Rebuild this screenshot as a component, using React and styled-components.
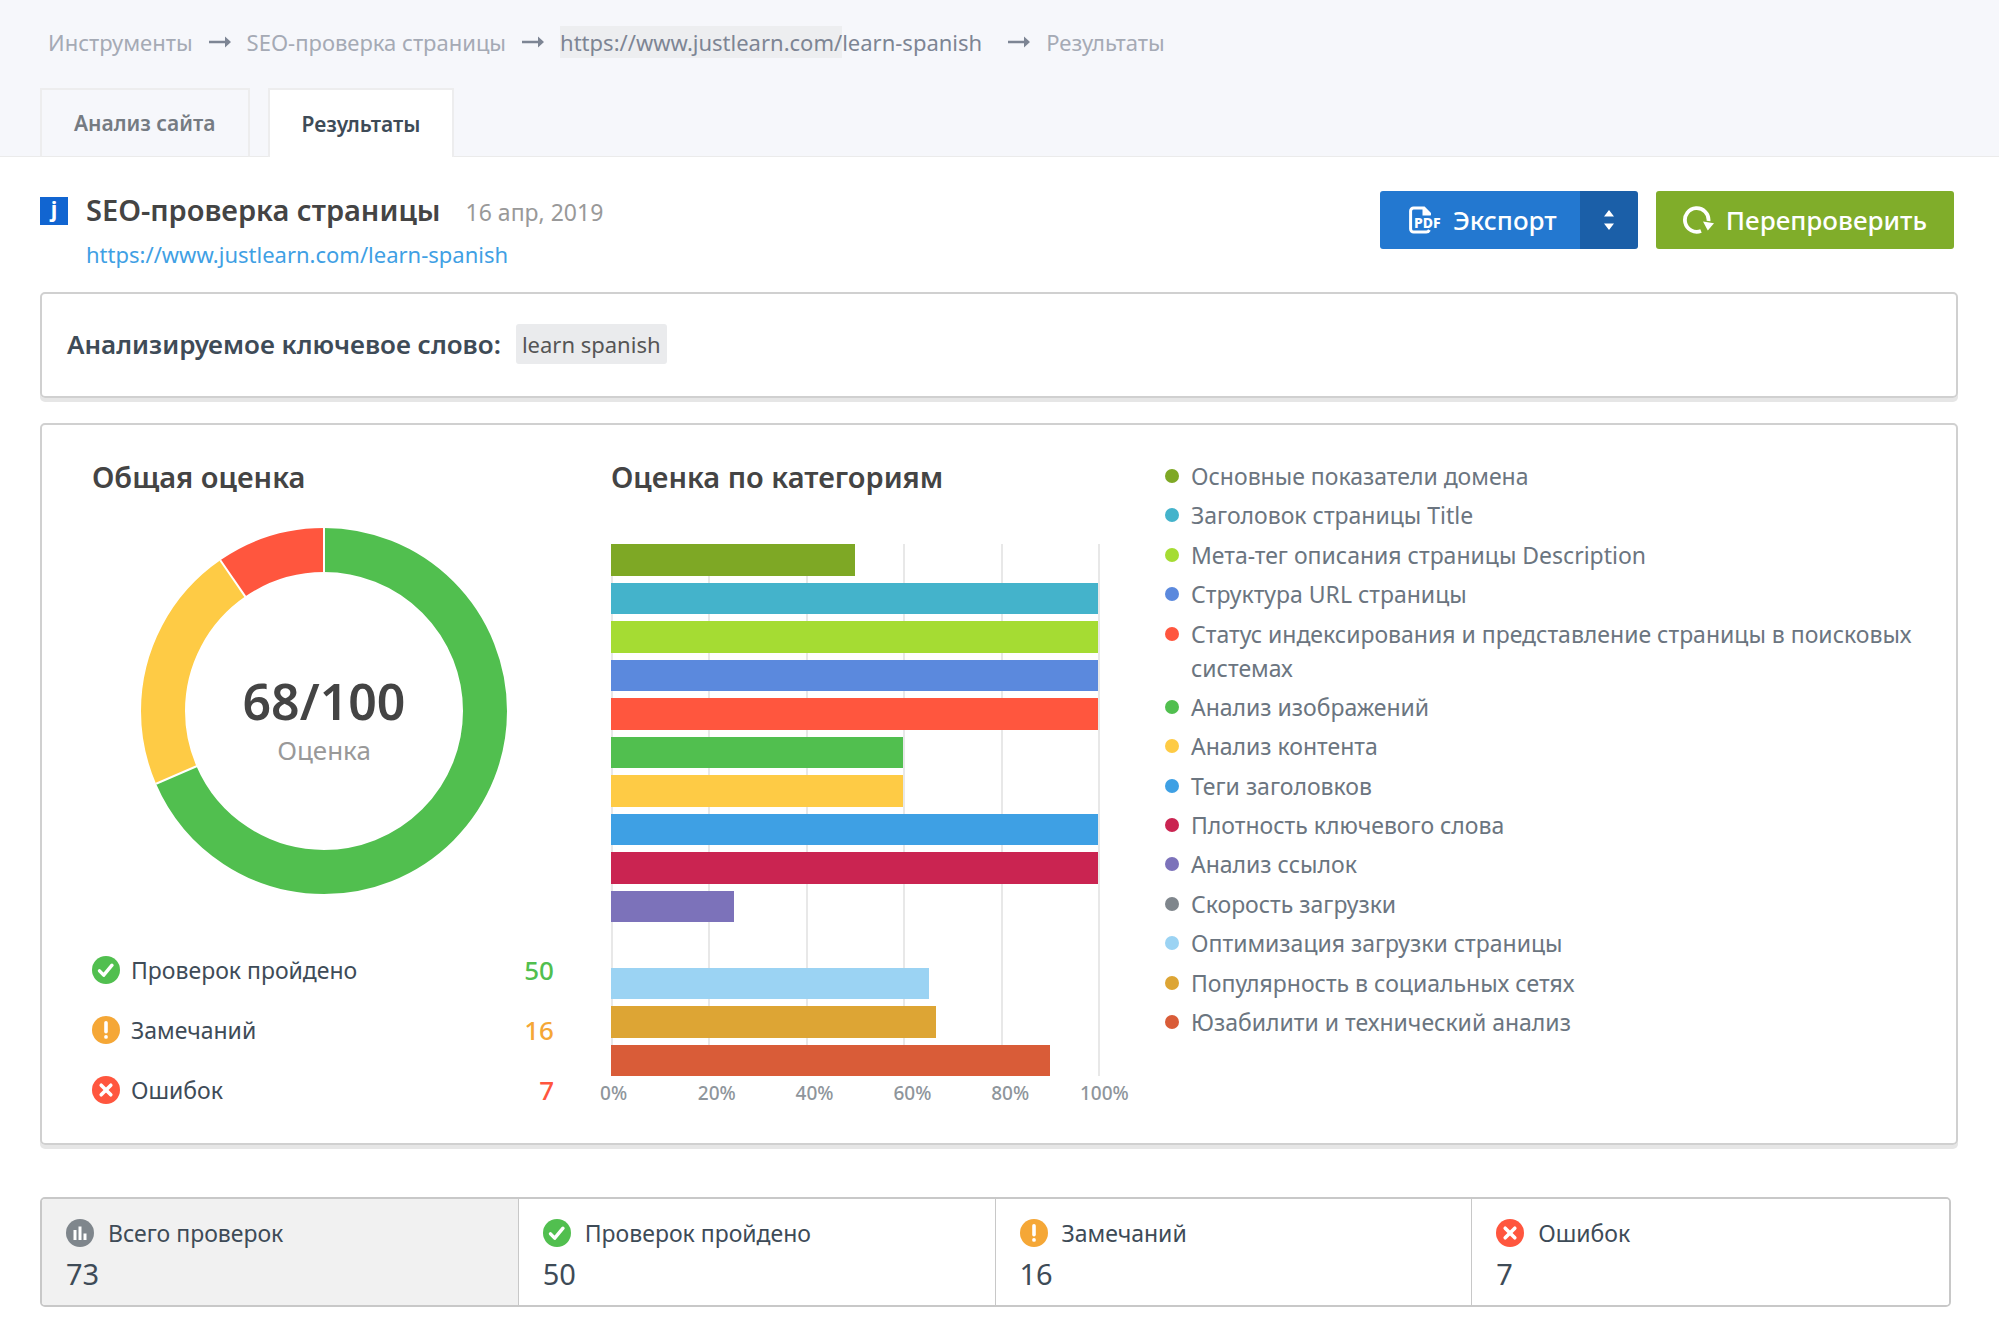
import styled, { createGlobalStyle } from 'styled-components';

const GlobalStyle = createGlobalStyle`
    * {
        box-sizing: border-box;
    }

    body {
        margin: 0;
        background: #fff;
        color: #3e4b57;
        font-family: "Noto Sans", "Open Sans", sans-serif;
        font-size: 23px;
    }

    h1, h2, p, ul, ol {
        margin: 0;
        padding: 0;
    }

    ul, ol {
        list-style: none;
    }

    button {
        font-family: inherit;
        cursor: pointer;
    }
`;

const TopBar = styled.header`
    display: flex;
    flex-direction: column;
    gap: 30px;
    padding: 26px 40px 0;
    background: #f6f7fb;
    box-shadow: inset 0 -1px #ebebeb;
`;

const Breadcrumbs = styled.ol`
    display: flex;
    align-items: center;
    gap: 16px;
    padding-left: 8px;
    line-height: 32px;
    font-size: 22px;
`;

const Crumb = styled.li`
    display: flex;
    align-items: center;
    gap: 16px;
    color: #a5aab5;

    &:nth-child(4) {
        margin-left: 10px;
    }
`;

const CrumbLink = styled.a`
    color: ${({ $dark }) => ($dark ? '#7d8594' : 'inherit')};
    text-decoration: none;
`;

const Domain = styled.span`
    display: inline-block;
    background: #edeef0;
`;

const Tabs = styled.div`
    display: flex;
    gap: 18px;
`;

const Tab = styled.button`
    height: 69px;
    padding: 0 32px;
    border: 2px solid #ededee;
    border-bottom: ${({ $active }) => ($active ? '0' : '1px solid #ebebeb')};
    background: ${({ $active }) => ($active ? '#fff' : 'transparent')};
    color: ${({ $active }) => ($active ? '#3e4b57' : '#757b82')};
    font-size: 21px;
    font-weight: 600;
`;

const Main = styled.main`
    padding: 31px 41px 40px 40px;
`;

const PageHead = styled.div`
    display: flex;
    justify-content: space-between;
    align-items: flex-start;
    padding-right: 4px;
    margin-bottom: 18px;
`;

const TitleBlock = styled.div`
    display: grid;
    grid-template-columns: 28px auto;
    column-gap: 18px;
    align-items: center;
`;

const Favicon = styled.svg`
    width: 28px;
    height: 28px;
    overflow: visible;
    background: #1165d1;
`;

const TitleRow = styled.div`
    display: flex;
    align-items: baseline;
    gap: 25px;
    line-height: 44px;
`;

const Title = styled.h1`
    color: #444;
    font-size: 29px;
    font-weight: 600;
`;

const CheckDate = styled.time`
    color: #999;
    font-size: 23px;
`;

const PageUrl = styled.a`
    grid-column: 2;
    color: #3fa0e4;
    font-size: 22px;
    line-height: 40px;
    text-decoration: none;
`;

const Actions = styled.div`
    display: flex;
    gap: 18px;
    padding-top: 3px;
`;

const SplitButton = styled.div`
    display: flex;
    overflow: hidden;
    border-radius: 3px;
`;

const ActionButton = styled.button`
    display: flex;
    align-items: center;
    gap: 12px;
    height: 58px;
    padding: ${({ $pad }) => $pad};
    border: 0;
    border-radius: ${({ $radius }) => $radius || 0}px;
    background: ${({ $color }) => $color};
    color: #fff;
    font-size: 26px;
    font-weight: 500;
`;

const Card = styled.section`
    border: 2px solid #d0d0d0;
    border-radius: 5px;
    box-shadow: 0 4px #e6e6e6;
`;

const KeywordCard = styled(Card)`
    display: flex;
    align-items: center;
    gap: 15px;
    height: 106px;
    padding: 0 25px 3px;
    margin-bottom: 25px;
`;

const KeywordLabel = styled.h2`
    font-size: 26px;
    font-weight: 600;
`;

const Keyword = styled.span`
    padding: 0 6px;
    border-radius: 3px;
    background: #eaebed;
    color: #555;
    font-size: 22px;
    line-height: 40px;
`;

const ScoreCard = styled(Card)`
    display: grid;
    grid-template-columns: 462fr 489fr 779fr;
    column-gap: 57px;
    padding: 32px 20px 23px 50px;
    margin-bottom: 52px;
`;

const Heading = styled.h2`
    color: #444;
    font-size: 29px;
    font-weight: 600;
    line-height: 40px;
`;

const Donut = styled.div`
    display: grid;
    place-items: center;
    margin: 31px 0 46px 2px;

    > * {
        grid-area: 1 / 1;
    }

    svg {
        width: 366px;
        height: 366px;
        transform: rotate(-90deg);
    }
`;

const Score = styled.p`
    padding-top: 18px;
    color: #444;
    font-size: 50px;
    font-weight: 600;
    line-height: 60px;
    text-align: center;
`;

const ScoreLabel = styled.span`
    display: block;
    color: #999;
    font-size: 26px;
    font-weight: 400;
    line-height: 38px;
`;

const Stat = styled.li`
    display: flex;
    align-items: center;
    gap: 11px;
    height: 60px;
`;

const StatValue = styled.span`
    margin-left: auto;
    color: ${({ $color }) => $color};
    font-size: 26px;
    font-weight: 500;
`;

const StatusSvg = styled.svg`
    flex: none;
    width: 28px;
    height: 28px;
`;

const Plot = styled.div`
    display: grid;
    grid-template-rows: repeat(14, 1fr);
    row-gap: 7px;
    height: 532px;
    margin-top: 47px;
    border-right: 2px solid #e8e8e8;
    background: repeating-linear-gradient(to right, #e8e8e8 0 2px, transparent 2px 20%);
`;

const Bar = styled.div`
    background: ${({ $color }) => $color};
`;

const Axis = styled.div`
    display: flex;
    margin-left: -11px;
    margin-right: 11px;
    color: #8e959b;
    font-size: 19px;
    font-weight: 500;
    line-height: 34px;

    span {
        flex: 0 0 20%;
    }

    span:last-child {
        flex-basis: auto;
        margin-left: -9px;
    }
`;

const Legend = styled.ul`
    display: flex;
    flex-direction: column;
    justify-content: space-between;
    margin: 2px 0 81px;
    padding-left: 8px;
    color: #6b7580;
    font-size: 23px;
    line-height: 34px;
`;

const LegendItem = styled.li`
    display: flex;
    gap: 12px;

    &::before {
        content: "";
        flex: none;
        width: 14px;
        height: 14px;
        margin-top: 10px;
        border-radius: 50%;
        background: ${({ $color }) => $color};
    }
`;

const Summary = styled.div`
    display: grid;
    grid-template-columns: repeat(4, 1fr);
    margin-right: 7px;
    overflow: hidden;
    border: 2px solid #c8c8c8;
    border-radius: 5px;
`;

const SummaryCell = styled.button`
    display: grid;
    grid-template-columns: 28px auto;
    justify-content: start;
    align-items: center;
    column-gap: 14px;
    padding: 15px 24px 9px;
    border: 0;
    border-right: 1px solid #c8c8c8;
    background: ${({ $active }) => ($active ? '#f1f1f1' : '#fff')};
    color: inherit;
    font-size: 23px;
    line-height: 38px;
    text-align: left;

    &:last-child {
        border-right: 0;
    }
`;

const SummaryValue = styled.span`
    grid-column: 1 / -1;
    font-size: 29px;
    line-height: 44px;
`;

const categories = [
    { name: 'Основные показатели домена', color: '#7ea825', value: 50.2 },
    { name: 'Заголовок страницы Title', color: '#44b3cb', value: 100 },
    { name: 'Мета-тег описания страницы Description', color: '#a5dc33', value: 100 },
    { name: 'Структура URL страницы', color: '#5b89dd', value: 100 },
    { name: 'Статус индексирования и представление страницы в поисковых системах', color: '#ff563e', value: 100 },
    { name: 'Анализ изображений', color: '#51bf4f', value: 60 },
    { name: 'Анализ контента', color: '#fecb45', value: 60 },
    { name: 'Теги заголовков', color: '#3ea0e4', value: 100 },
    { name: 'Плотность ключевого слова', color: '#ca2451', value: 100 },
    { name: 'Анализ ссылок', color: '#7c72ba', value: 25.2 },
    { name: 'Скорость загрузки', color: '#7f868c', value: 0 },
    { name: 'Оптимизация загрузки страницы', color: '#9bd3f3', value: 65.3 },
    { name: 'Популярность в социальных сетях', color: '#dda534', value: 66.7 },
    { name: 'Юзабилити и технический анализ', color: '#d95c38', value: 90.2 },
];

const stats = [
    { kind: 'passed', label: 'Проверок пройдено', value: 50, color: '#51bf4f', slice: '#51bf4f' },
    { kind: 'warning', label: 'Замечаний', value: 16, color: '#f5a736', slice: '#fecb45' },
    { kind: 'error', label: 'Ошибок', value: 7, color: '#ff563e', slice: '#ff563e' },
];

const total = stats.reduce((sum, stat) => sum + stat.value, 0);

function Arrow() {
    return (
        <svg width="22" height="12" viewBox="0 0 22 12" fill="#7d8594" aria-hidden="true">
            <path d="M0 4.8h16V0.5l6 5.5-6 5.5V7.2H0z" />
        </svg>
    );
}

function StatusIcon({ kind }) {
    return (
        <StatusSvg viewBox="0 0 28 28" fill="none" stroke="#fff" strokeLinecap="round" aria-hidden="true">
            {kind === 'passed' && (
                <>
                    <circle cx="14" cy="14" r="14" fill="#51bf4f" stroke="none" />
                    <path d="M7.5 14.8l4.2 4.4 8.3-10" strokeWidth="3.4" strokeLinejoin="round" />
                </>
            )}
            {kind === 'warning' && (
                <>
                    <circle cx="14" cy="14" r="14" fill="#f5a736" stroke="none" />
                    <path d="M14 6.8v9" strokeWidth="3.6" />
                    <circle cx="14" cy="20.9" r="1.9" fill="#fff" stroke="none" />
                </>
            )}
            {kind === 'error' && (
                <>
                    <circle cx="14" cy="14" r="14" fill="#ff563e" stroke="none" />
                    <path d="M9.2 9.2l9.6 9.6M18.8 9.2l-9.6 9.6" strokeWidth="3.6" />
                </>
            )}
            {kind === 'total' && (
                <>
                    <circle cx="14" cy="14" r="14" fill="#7f868c" stroke="none" />
                    <path d="M7.5 11h3v10h-3zM12.5 7.5h3V21h-3zM17.5 14.5h3V21h-3z" fill="#fff" stroke="none" />
                </>
            )}
        </StatusSvg>
    );
}

function PdfIcon() {
    return (
        <svg width="32" height="28" viewBox="0 0 32 28" overflow="visible" aria-hidden="true">
            <path d="M20.5 9V7.5L15 2H4.6A3 3 0 0 0 1.6 5v18a3 3 0 0 0 3 3H17a3.6 3.6 0 0 0 3.4-2" fill="none" stroke="#fff" strokeWidth="3" />
            <path d="M13.5 1v8.5H22z" fill="#fff" />
            <text
                x="5"
                y="22"
                fill="#fff"
                stroke="#2378d0"
                strokeWidth="1"
                paintOrder="stroke"
                fontSize="14"
                fontWeight="800"
            >
                PDF
            </text>
        </svg>
    );
}

function RefreshIcon() {
    return (
        <svg width="31" height="28" viewBox="0 0 31 28" aria-hidden="true">
            <path d="M18 25A11.8 11.8 0 1 1 25.5 15" fill="none" stroke="#fff" strokeWidth="3.8" />
            <path d="M20 15.6l11 1.6-6.2 7.4z" fill="#fff" />
        </svg>
    );
}

function SortIcon() {
    return (
        <svg width="10" height="20" viewBox="0 0 10 20" fill="#fff" aria-hidden="true">
            <path d="M5 0l5 6.4H0zM5 20l5-6.4H0z" />
        </svg>
    );
}

function ScoreDonut() {
    const circumference = 2 * Math.PI * 161;
    let passed = 0;
    const slices = stats.map((stat) => {
        const start = passed / total;
        passed += stat.value;
        return { ...stat, start, share: stat.value / total };
    });

    return (
        <Donut>
            <svg viewBox="0 0 366 366" aria-hidden="true">
                {slices.map((slice) => (
                    <circle
                        key={slice.kind}
                        cx="183"
                        cy="183"
                        r="161"
                        fill="none"
                        stroke={slice.slice}
                        strokeWidth="44"
                        strokeDasharray={`${slice.share * circumference} ${circumference}`}
                        strokeDashoffset={-slice.start * circumference}
                    />
                ))}
                {slices.map((slice) => (
                    <path
                        key={slice.kind}
                        d="M320 183h46"
                        stroke="#fff"
                        strokeWidth="2"
                        transform={`rotate(${slice.start * 360} 183 183)`}
                    />
                ))}
            </svg>
            <Score>
                68/100
                <ScoreLabel>Оценка</ScoreLabel>
            </Score>
        </Donut>
    );
}

function App() {
    return (
        <>
            <GlobalStyle />
            <TopBar>
                <nav>
                    <Breadcrumbs>
                        <Crumb>
                            <CrumbLink href="#tools">Инструменты</CrumbLink>
                        </Crumb>
                        <Crumb>
                            <Arrow />
                            <CrumbLink href="#seo">SEO-проверка страницы</CrumbLink>
                        </Crumb>
                        <Crumb>
                            <Arrow />
                            <CrumbLink href="#page" $dark>
                                <Domain>https://www.justlearn.com/</Domain>learn-spanish
                            </CrumbLink>
                        </Crumb>
                        <Crumb>
                            <Arrow />
                            <span>Результаты</span>
                        </Crumb>
                    </Breadcrumbs>
                </nav>
                <Tabs role="tablist">
                    <Tab role="tab" aria-selected="false">Анализ сайта</Tab>
                    <Tab role="tab" aria-selected="true" $active>Результаты</Tab>
                </Tabs>
            </TopBar>

            <Main>
                <PageHead>
                    <TitleBlock>
                        <Favicon viewBox="0 0 28 28" aria-hidden="true">
                            <text x="14" y="20" fill="#fff" fontSize="22" fontWeight="700" textAnchor="middle">j</text>
                        </Favicon>
                        <TitleRow>
                            <Title>SEO-проверка страницы</Title>
                            <CheckDate dateTime="2019-04-16">16 апр, 2019</CheckDate>
                        </TitleRow>
                        <PageUrl href="#page">https://www.justlearn.com/learn-spanish</PageUrl>
                    </TitleBlock>
                    <Actions>
                        <SplitButton>
                            <ActionButton $color="#2378d0" $pad="0 23px 0 29px">
                                <PdfIcon />
                                Экспорт
                            </ActionButton>
                            <ActionButton $color="#1b5fa8" $pad="0 24px" aria-label="Формат экспорта">
                                <SortIcon />
                            </ActionButton>
                        </SplitButton>
                        <ActionButton $color="#80ad2a" $pad="0 27px" $radius={3}>
                            <RefreshIcon />
                            Перепроверить
                        </ActionButton>
                    </Actions>
                </PageHead>

                <KeywordCard>
                    <KeywordLabel>Анализируемое ключевое слово:</KeywordLabel>
                    <Keyword>learn spanish</Keyword>
                </KeywordCard>

                <ScoreCard>
                    <div>
                        <Heading>Общая оценка</Heading>
                        <ScoreDonut />
                        <ul>
                            {stats.map((stat) => (
                                <Stat key={stat.kind}>
                                    <StatusIcon kind={stat.kind} />
                                    {stat.label}
                                    <StatValue $color={stat.color}>{stat.value}</StatValue>
                                </Stat>
                            ))}
                        </ul>
                    </div>
                    <div>
                        <Heading>Оценка по категориям</Heading>
                        <Plot>
                            {categories.map((category) => (
                                <Bar
                                    key={category.name}
                                    $color={category.color}
                                    style={{ width: `${category.value}%` }}
                                />
                            ))}
                        </Plot>
                        <Axis>
                            {[0, 20, 40, 60, 80, 100].map((tick) => (
                                <span key={tick}>{tick}%</span>
                            ))}
                        </Axis>
                    </div>
                    <Legend>
                        {categories.map((category) => (
                            <LegendItem key={category.name} $color={category.color}>
                                {category.name}
                            </LegendItem>
                        ))}
                    </Legend>
                </ScoreCard>

                <Summary>
                    <SummaryCell $active>
                        <StatusIcon kind="total" />
                        Всего проверок
                        <SummaryValue>{total}</SummaryValue>
                    </SummaryCell>
                    {stats.map((stat) => (
                        <SummaryCell key={stat.kind}>
                            <StatusIcon kind={stat.kind} />
                            {stat.label}
                            <SummaryValue>{stat.value}</SummaryValue>
                        </SummaryCell>
                    ))}
                </Summary>
            </Main>
        </>
    );
}

export default App;
